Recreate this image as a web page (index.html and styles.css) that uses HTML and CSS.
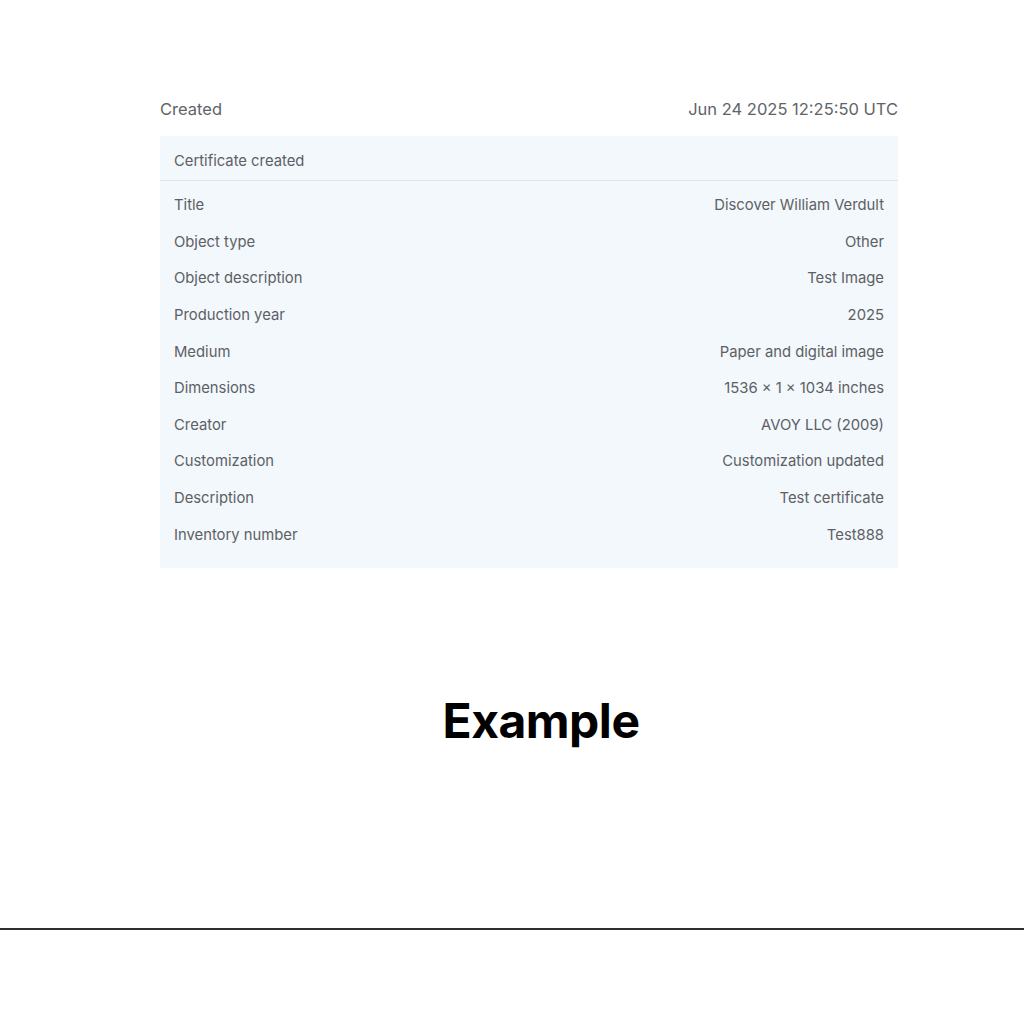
FILE: index.html
```html
<!DOCTYPE html>
<html>
<head>
<meta charset="utf-8">
<link rel="stylesheet" href="styles.css">
</head>
<body>
<div class="page">
  <section class="activity">
    <div class="activity-head">
      <span>Created</span>
      <span>Jun 24 2025 12:25:50 UTC</span>
    </div>
    <div class="card">
      <div class="card-title">Certificate created</div>
      <div class="rows">
        <div class="row"><span>Title</span><span>Discover William Verdult</span></div>
        <div class="row"><span>Object type</span><span>Other</span></div>
        <div class="row"><span>Object description</span><span>Test Image</span></div>
        <div class="row"><span>Production year</span><span>2025</span></div>
        <div class="row"><span>Medium</span><span>Paper and digital image</span></div>
        <div class="row"><span>Dimensions</span><span>1536 × 1 × 1034 inches</span></div>
        <div class="row"><span>Creator</span><span>AVOY LLC (2009)</span></div>
        <div class="row"><span>Customization</span><span>Customization updated</span></div>
        <div class="row"><span>Description</span><span>Test certificate</span></div>
        <div class="row"><span>Inventory number</span><span>Test888</span></div>
      </div>
    </div>
  </section>
  <div class="caption">Example</div>
  <hr class="rule">
</div>
</body>
</html>
```
FILE: styles.css
```css
html, body {
  margin: 0;
  padding: 0;
  background: #ffffff;
}
.page {
  width: 1024px;
  height: 1024px;
  display: flex;
  flex-direction: column;
  font-family: Inter, "Noto Sans", sans-serif;
}
.activity {
  margin: 97px 126px 0 160px;
  width: 738px;
}
.activity-head {
  display: flex;
  justify-content: space-between;
  font-size: 16.5px;
  line-height: 24px;
  color: #606468;
  margin-bottom: 15px;
}
.card {
  background: #f3f8fc;
}
.card-title {
  padding: 15px 14px 9px;
  line-height: 20px;
  font-size: 14.8px;
  color: #5c6065;
  border-bottom: 1px solid #dfe5ea;
}
.rows {
  padding: 6px 14px 15px;
}
.row {
  height: 36.6px;
  display: flex;
  align-items: center;
  justify-content: space-between;
  font-size: 14.8px;
  color: #5c6065;
}
.caption {
  margin-top: 125px;
  text-align: center;
  padding-left: 58px;
  font-family: Inter, sans-serif;
  font-weight: 700;
  font-size: 48px;
  line-height: 56px;
  color: #000;
  letter-spacing: -0.5px;
}
.rule {
  margin: 179px 0 0;
  border: 0;
  height: 2px;
  background: #2e2e2e;
}
```
